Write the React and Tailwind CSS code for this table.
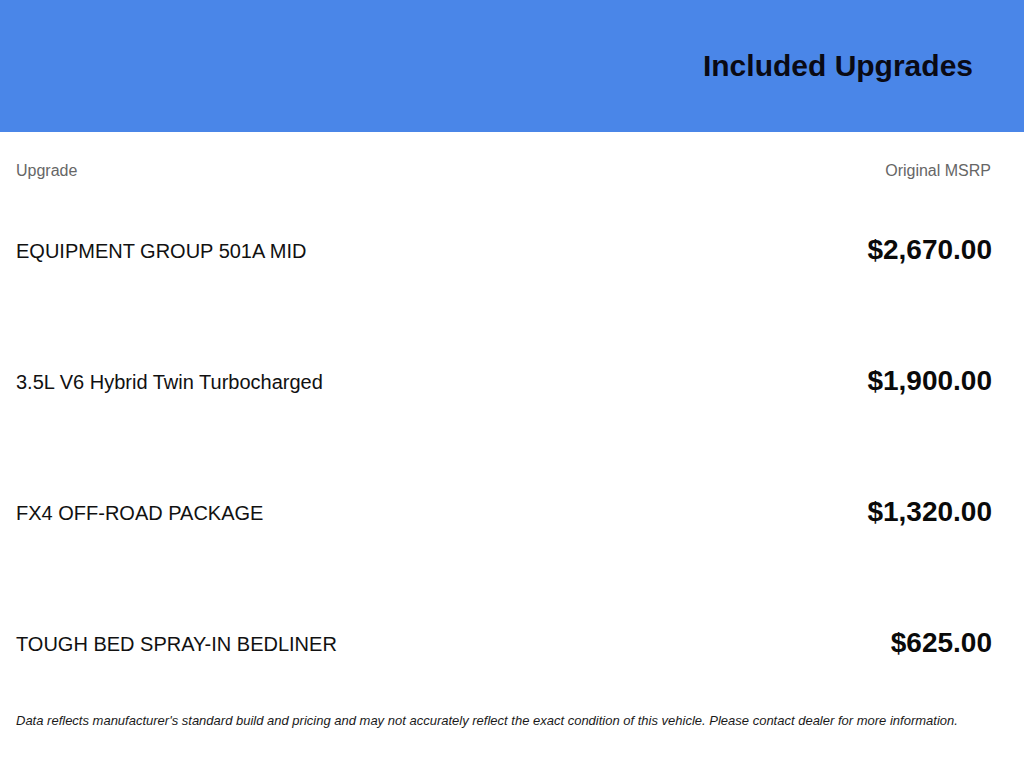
import React from 'react';

const upgrades = [
    { name: 'EQUIPMENT GROUP 501A MID', price: '$2,670.00' },
    { name: '3.5L V6 Hybrid Twin Turbocharged', price: '$1,900.00' },
    { name: 'FX4 OFF-ROAD PACKAGE', price: '$1,320.00' },
    { name: 'TOUGH BED SPRAY-IN BEDLINER', price: '$625.00' },
];

const App = () => {
    return (
        <div className="w-[1024px] h-[768px] bg-white font-['Liberation_Sans',Arial,sans-serif] overflow-hidden">
            {/* Header */}
            <div className="h-[132px] bg-[#4a86e8] flex items-center justify-end pr-[51px]">
                <h1 className="text-[30px] leading-none font-bold text-[#0a0a14]">Included Upgrades</h1>
            </div>

            {/* Column labels */}
            <div className="h-[53px] pt-[27px] pl-4 pr-[33px] flex justify-between text-[16px] leading-6 text-[#666666]">
                <span>Upgrade</span>
                <span>Original MSRP</span>
            </div>

            {/* Rows */}
            {upgrades.map((u) => (
                <div key={u.name} className="h-[131px] pl-4 pr-8 flex items-center justify-between">
                    <span className="text-[20px] leading-7 text-[#111111]">{u.name}</span>
                    <span className="text-[28px] leading-8 font-bold text-[#0a0a0a] -mt-[2px]">{u.price}</span>
                </div>
            ))}

            {/* Disclaimer */}
            <p className="pl-4 pt-[3px] text-[13px] leading-[18px] italic text-[#1a1a1a]">
                Data reflects manufacturer's standard build and pricing and may not accurately reflect the exact condition of this vehicle. Please contact dealer for more information.
            </p>
        </div>
    );
};

export default App;
